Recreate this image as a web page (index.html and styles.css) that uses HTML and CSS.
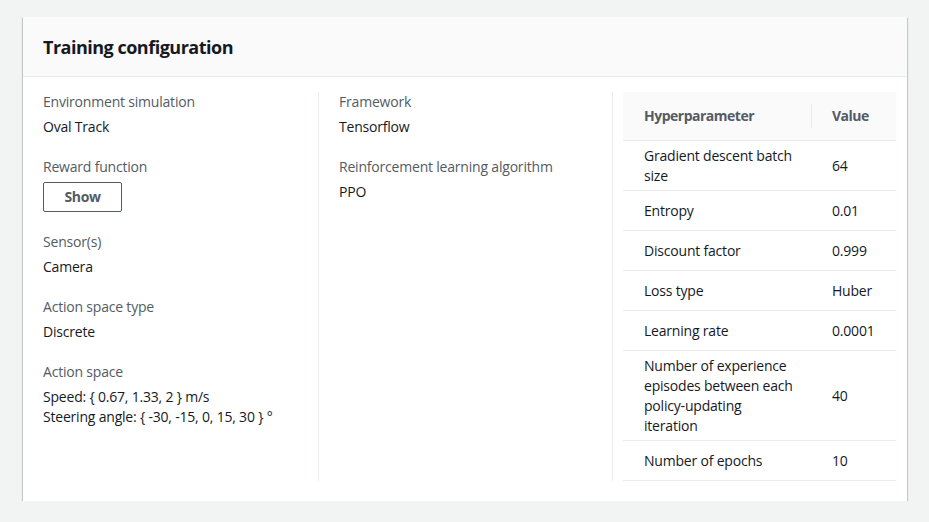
FILE: index.html
```html
<!DOCTYPE html>
<html lang="en">
<head>
<meta charset="utf-8">
<title>Training configuration</title>
<link rel="stylesheet" href="styles.css">
</head>
<body>
<div class="card">
  <div class="card-header"><h2 class="title">Training configuration</h2></div>
  <div class="card-body">
    <div class="col col-1">
      <div class="kv">
        <div class="label">Environment simulation</div>
        <div class="value">Oval Track</div>
      </div>
      <div class="kv">
        <div class="label">Reward function</div>
        <div class="value"><button class="btn">Show</button></div>
      </div>
      <div class="kv">
        <div class="label">Sensor(s)</div>
        <div class="value">Camera</div>
      </div>
      <div class="kv">
        <div class="label">Action space type</div>
        <div class="value">Discrete</div>
      </div>
      <div class="kv">
        <div class="label">Action space</div>
        <div class="value">Speed: { 0.67, 1.33, 2 } m/s<br>Steering angle: { -30, -15, 0, 15, 30 } °</div>
      </div>
    </div>
    <div class="col col-2">
      <div class="kv">
        <div class="label">Framework</div>
        <div class="value">Tensorflow</div>
      </div>
      <div class="kv">
        <div class="label">Reinforcement learning algorithm</div>
        <div class="value">PPO</div>
      </div>
    </div>
    <div class="col col-3">
      <table class="hp">
        <thead>
          <tr><th class="c-name">Hyperparameter</th><th class="c-val">Value</th></tr>
        </thead>
        <tbody>
          <tr><td>Gradient descent batch size</td><td>64</td></tr>
          <tr><td>Entropy</td><td>0.01</td></tr>
          <tr><td>Discount factor</td><td>0.999</td></tr>
          <tr><td>Loss type</td><td>Huber</td></tr>
          <tr><td>Learning rate</td><td>0.0001</td></tr>
          <tr><td>Number of experience episodes between each policy-updating iteration</td><td>40</td></tr>
          <tr><td>Number of epochs</td><td>10</td></tr>
        </tbody>
      </table>
    </div>
  </div>
</div>
</body>
</html>
```
FILE: styles.css
```css
* { box-sizing: border-box; }
html, body { margin: 0; padding: 0; }
body {
  background: #f2f3f3;
  font-family: "Open Sans", "Noto Sans", sans-serif;
  font-size: 14px;
  line-height: 20px;
  letter-spacing: -0.2px;
  color: #16191f;
  padding: 17px 22px 0 23px;
}
.card {
  background: #fff;
  box-shadow: 0 1px 1px 0 rgba(0,28,36,.3), 1px 1px 1px 0 rgba(0,28,36,.15), -1px 1px 1px 0 rgba(0,28,36,.15);
}
.card-header {
  background: #fafafa;
  border-bottom: 1px solid #eaeded;
  padding: 19px 20px 18px;
}
.title {
  margin: 0;
  font-size: 18px;
  line-height: 22px;
  font-weight: 700;
  letter-spacing: -0.5px;
  color: #16191f;
}
.card-body {
  display: grid;
  grid-template-columns: 275px 294px 1fr;
  padding: 15px 11px 20px 20px;
}
.col-2 { border-left: 1px solid #eaeded; padding-left: 20px; }
.col-3 { border-left: 1px solid #eaeded; padding-left: 10px; }
.kv { margin-bottom: 20px; }
.label { color: #545b64; }
.value { margin-top: 5px; color: #16191f; }
.btn {
  font-family: inherit;
  font-size: 14px;
  line-height: 20px;
  font-weight: 700;
  letter-spacing: -0.4px;
  color: #545b64;
  background: #fff;
  border: 1px solid #545b64;
  border-radius: 2px;
  padding: 4px 0;
  width: 79px;
  text-align: center;
  display: block;
}
.hp {
  width: 100%;
  border-collapse: collapse;
  table-layout: fixed;
}
.hp th {
  background: #fafafa;
  color: #545b64;
  font-weight: 700;
  letter-spacing: -0.5px;
  text-align: left;
  height: 48px;
  padding: 0 0 0 21px;
  border-bottom: 1px solid #eaeded;
}
.hp th.c-name { width: 188px; }
.hp th.c-val { position: relative; }
.hp th.c-val::before {
  content: "";
  position: absolute;
  left: 0;
  top: 12px;
  bottom: 12px;
  border-left: 1px solid #eaeded;
}
.hp td {
  height: 40px;
  padding: 5px 10px 4px 21px;
  border-bottom: 1px solid #eaeded;
  vertical-align: middle;
}
.hp td:first-child { padding-right: 16px; }
```
